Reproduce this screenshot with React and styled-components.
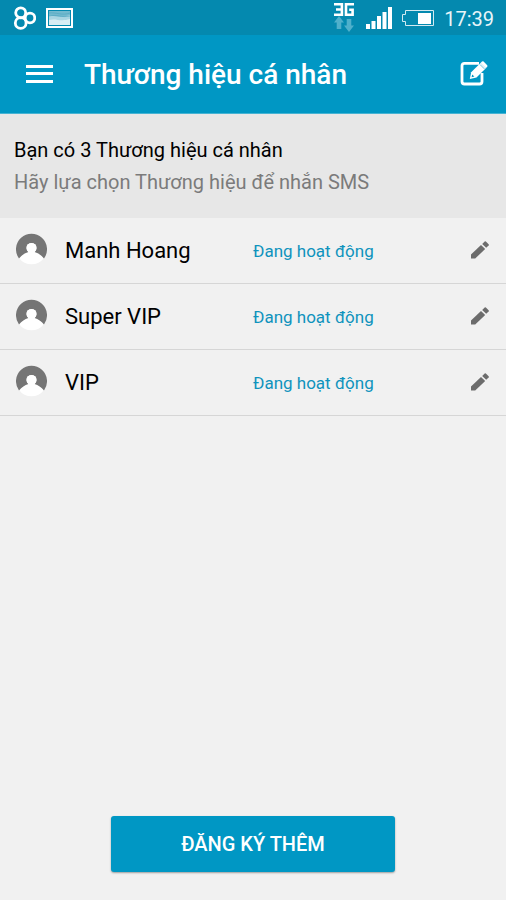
import React from 'react'
import styled, { createGlobalStyle } from 'styled-components'

const GlobalStyle = createGlobalStyle`
* {
  box-sizing: border-box;
}
body {
  margin: 0;
  background: #f1f1f1;
  font-family: Roboto, "Noto Sans", sans-serif;
}
`

const Page = styled.div`
display: flex;
flex-direction: column;
min-height: 100vh;
`

const StatusBar = styled.div`
display: flex;
align-items: center;
justify-content: space-between;
height: 35px;
padding: 0 12px;
background: #0489af;
color: #fff;
`

const StatusGroup = styled.div`
display: flex;
align-items: center;
gap: 10px;
`

const Network = styled.div`
display: flex;
flex-direction: column;
align-items: center;
padding-right: 2px;
`

const Clock = styled.time`
font-size: 20px;
line-height: 24px;
padding-top: 2px;
color: #e8f5f9;
`

const Header = styled.header`
display: flex;
align-items: center;
height: 79px;
padding: 0 16px 0 24px;
background: #0097c4;
border-bottom: 1px solid #45b3d3;
`

const Title = styled.h1`
flex: 1;
margin: 0 0 0 30px;
padding-top: 2px;
font-size: 28px;
line-height: 34px;
font-weight: 500;
color: #fff;
`

const IconButton = styled.button`
display: flex;
align-items: center;
justify-content: center;
padding: 0;
border: none;
background: none;
color: inherit;
cursor: pointer;
`

const Intro = styled.section`
padding: 20px 14px;
background: #e7e7e7;
`

const IntroText = styled.p`
margin: 0;
font-size: 20px;
line-height: 32px;
color: ${props => props.$muted ? '#7b7b7b' : '#000'};
`

const BrandList = styled.ul`
flex: 1;
margin: 0;
padding: 0;
list-style: none;
`

const BrandRow = styled.li`
display: grid;
grid-template-columns: 65px calc(50% - 65px) 1fr 52px;
align-items: center;
height: 66px;
border-bottom: 1px solid #d6d6d6;
`

const AvatarBox = styled.div`
padding: 0 0 4px 16px;
line-height: 0;
`

const BrandName = styled.span`
font-size: 22px;
line-height: 28px;
color: #000;
`

const BrandState = styled.span`
font-size: 17px;
line-height: 20px;
color: #0f93bd;
`

const Footer = styled.footer`
display: flex;
justify-content: center;
padding: 28px 0;
`

const RegisterButton = styled.button`
width: 56%;
height: 56px;
border: none;
border-radius: 3px;
background: #0097c4;
box-shadow: 0 1px 2px rgba(0, 0, 0, 0.35);
color: #fff;
font-family: inherit;
font-size: 20px;
font-weight: 500;
cursor: pointer;
`

const CirclesIcon = () => (
  <svg width="24" height="24" viewBox="0 0 24 24" fill="none" stroke="#fff" strokeWidth="2.8">
    <circle cx="8.7" cy="6.8" r="5" />
    <circle cx="8.7" cy="17" r="5.4" />
    <circle cx="18" cy="12" r="4.8" />
  </svg>
)

const PictureIcon = () => (
  <svg width="27" height="20" viewBox="0 0 27 20">
    <rect width="27" height="20" fill="#fff" />
    <rect x="2" y="2" width="23" height="16" fill="#0489af" />
    <rect x="3" y="3" width="21" height="14" fill="#72b9ce" />
    <path d="M3 8C9 7 14 11 24 7V17H3Z" fill="#a9d5e2" />
    <path d="M3 12C10 10 14 14 24 11V17H3Z" fill="#d9edf3" />
    <path d="M3 5C10 4 16 8 24 5M3 8C11 6 15 10 24 8" fill="none" stroke="#4ba5c0" strokeWidth="0.6" />
  </svg>
)

const ThreeGIcon = () => (
  <svg width="20" height="13" viewBox="0 0 20 13" fill="none" stroke="#fff" strokeWidth="2.6" role="img" aria-label="3G">
    <path d="M0 1.3H7.9V11.7H0M2 6.5H7.9M20 1.3H12V11.7H18.6V6.8H15.2" />
  </svg>
)

const TrafficIcon = () => (
  <svg width="20" height="16" viewBox="0 0 20 16" fill="#4fb0cb">
    <path d="M5 0L10 6.5H7.3V13H2.7V6.5H0ZM15 16L10 9.5H12.7V3H17.3V9.5H20Z" />
  </svg>
)

const SignalIcon = () => (
  <svg width="26" height="22" viewBox="0 0 26 22" fill="#fff">
    <path d="M0 17H4V22H0ZM5.5 14H9.5V22H5.5ZM11 9H15V22H11ZM16.5 5H20.5V22H16.5ZM22 0H26V22H22Z" />
  </svg>
)

const BatteryIcon = () => (
  <svg width="32" height="18" viewBox="0 0 32 18">
    <path d="M3.5 1.5H31.5V16.5H3.5V12.5H0.5V5.5H3.5Z" fill="none" stroke="#d3eaf1" />
    <rect x="16" y="4" width="13" height="11" fill="#fff" />
  </svg>
)

const MenuIcon = () => (
  <svg width="30" height="20" viewBox="0 0 30 20" fill="#fff">
    <path d="M2 1H29V4H2ZM2 8H29V11H2ZM2 16H29V19H2Z" />
  </svg>
)

const ComposeIcon = () => (
  <svg width="30" height="28" viewBox="0 0 30 28">
    <path d="M19 3.3H4.5Q2 3.3 2 5.8V21.5Q2 24 4.5 24H19.5Q22 24 22 21.5V13" fill="none" stroke="#fff" strokeWidth="2.8" />
    <path d="M9.8 19L11.2 12.3L20.5 3L25.8 8.3L16.5 17.6Z" fill="#fff" />
    <path d="M20.5 3L22 1.6Q22.8 1 23.6 1.6L27.2 5.2Q27.8 6 27.2 6.8L25.8 8.3Z" fill="#fff" />
    <path d="M12.2 14.4L14.4 16.6L11.6 17.2Z" fill="#0097c4" />
    <path d="M20 4.5L24.4 8.9" stroke="#0097c4" strokeWidth="0.6" />
  </svg>
)

const PencilIcon = () => (
  <svg width="18" height="20" viewBox="0 0 18 20" fill="#6c6c6c">
    <path d="M0 13.6L10 4L14.2 8L4.2 17.5H0Z" />
    <path d="M11.2 3L13.7 0.6Q14.3 0.1 14.9 0.6L17.6 3.2Q18.1 3.8 17.6 4.4L15.2 6.8Z" />
  </svg>
)

const AvatarIcon = () => (
  <svg width="31" height="32" viewBox="0 0 31 32">
    <path d="M3 25A15.5 15.5 0 0 0 28 25L20 14H11Z" fill="#fff" />
    <path d="M3 25.5A15.5 15.5 0 1 1 28 25.5Q24 20.5 18.6 18.9A5 5 0 1 0 12.4 18.9Q7 20.5 3 25.5Z" fill="#757575" />
    <circle cx="15.5" cy="14.9" r="5" fill="#fff" />
  </svg>
)

const brands = [
  { name: 'Manh Hoang', state: 'Đang hoạt động' },
  { name: 'Super VIP', state: 'Đang hoạt động' },
  { name: 'VIP', state: 'Đang hoạt động' },
]

const App = () => {
  return (
    <Page lang="vi">
      <GlobalStyle />
      <StatusBar>
        <StatusGroup>
          <CirclesIcon />
          <PictureIcon />
        </StatusGroup>
        <StatusGroup>
          <Network>
            <ThreeGIcon />
            <TrafficIcon />
          </Network>
          <SignalIcon />
          <BatteryIcon />
          <Clock>17:39</Clock>
        </StatusGroup>
      </StatusBar>

      <Header>
        <IconButton aria-label="Menu">
          <MenuIcon />
        </IconButton>
        <Title>Thương hiệu cá nhân</Title>
        <IconButton aria-label="Soạn tin">
          <ComposeIcon />
        </IconButton>
      </Header>

      <Intro>
        <IntroText>Bạn có {brands.length} Thương hiệu cá nhân</IntroText>
        <IntroText $muted>Hãy lựa chọn Thương hiệu để nhắn SMS</IntroText>
      </Intro>

      <BrandList>
        {brands.map(brand => (
          <BrandRow key={brand.name}>
            <AvatarBox>
              <AvatarIcon />
            </AvatarBox>
            <BrandName>{brand.name}</BrandName>
            <BrandState>{brand.state}</BrandState>
            <IconButton aria-label={'Sửa ' + brand.name}>
              <PencilIcon />
            </IconButton>
          </BrandRow>
        ))}
      </BrandList>

      <Footer>
        <RegisterButton>ĐĂNG KÝ THÊM</RegisterButton>
      </Footer>
    </Page>
  )
}

export default App
